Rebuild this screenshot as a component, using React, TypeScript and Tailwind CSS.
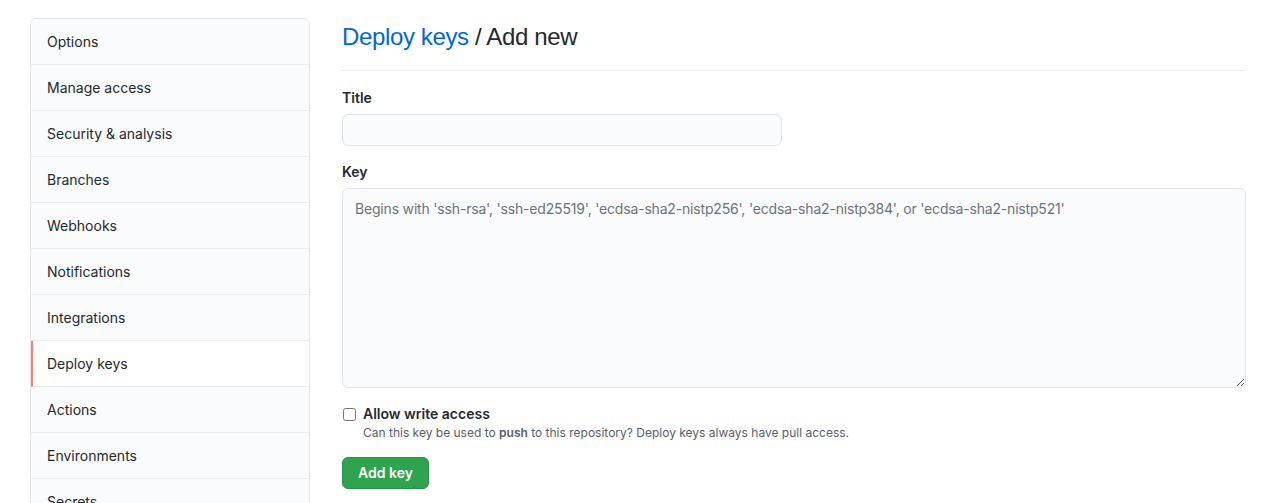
import React from "react";

const items = [
  "Options",
  "Manage access",
  "Security & analysis",
  "Branches",
  "Webhooks",
  "Notifications",
  "Integrations",
  "Deploy keys",
  "Actions",
  "Environments",
  "Secrets",
];

export default function App() {
  return (
    <div
      className="min-h-screen bg-white text-[#24292e] flex pl-[30px] pr-[25px] pt-[18px] gap-8"
      style={{ fontFamily: "Inter, 'Liberation Sans', sans-serif" }}
    >
      {/* sidebar */}
      <nav className="w-[280px] shrink-0 self-start border border-[#e1e4e8] rounded-md overflow-hidden">
        {items.map((item) => {
          const active = item === "Deploy keys";
          return (
            <div
              key={item}
              className={`h-[46px] flex items-center text-sm border-b border-[#eaecef] ${
                active
                  ? "bg-white border-l-2 border-l-[#f9826c] pl-[14px]"
                  : "bg-[#fafbfc] pl-4"
              }`}
            >
              {item}
            </div>
          );
        })}
      </nav>

      {/* main */}
      <main className="flex-1">
        <div className="pb-[15px] border-b border-[#eaecef] mt-[1px]">
          <h2
            className="text-2xl leading-[36px] font-normal tracking-[-0.015em]"
            style={{ fontFamily: "'Liberation Sans', Arial, sans-serif" }}
          >
            <a href="#" className="text-[#0366d6]">
              Deploy keys
            </a>{" "}
            / Add new
          </h2>
        </div>

        <div className="mt-[17px]">
          <label className="block text-sm font-semibold leading-5">Title</label>
          <input
            type="text"
            className="mt-[6px] w-[440px] h-8 rounded-md border border-[#e1e4e8] bg-[#fafbfc] px-3 text-sm outline-none"
          />
        </div>

        <div className="mt-[16px]">
          <label className="block text-sm font-semibold leading-5">Key</label>
          <textarea
            className="mt-[6px] block w-full h-[200px] rounded-md border border-[#e1e4e8] bg-[#fafbfc] px-3 py-[10px] text-sm leading-5 tracking-[-0.013em] outline-none placeholder:text-[#6a737d]"
            placeholder="Begins with 'ssh-rsa', 'ssh-ed25519', 'ecdsa-sha2-nistp256', 'ecdsa-sha2-nistp384', or 'ecdsa-sha2-nistp521'"
          />
        </div>

        <div className="mt-[16px] flex gap-[7px]">
          <input type="checkbox" className="mt-[4px] w-[13px] h-[13px] ml-[1px]" />
          <div>
            <div className="text-sm font-semibold leading-5">Allow write access</div>
            <p className="text-xs text-[#586069] leading-[18px]">
              Can this key be used to <strong className="font-semibold">push</strong> to this
              repository? Deploy keys always have pull access.
            </p>
          </div>
        </div>

        <button className="mt-[15px] h-8 px-[15px] rounded-md bg-[#2ea44f] border border-[#2a9147] text-white text-sm font-semibold">
          Add key
        </button>
      </main>
    </div>
  );
}
